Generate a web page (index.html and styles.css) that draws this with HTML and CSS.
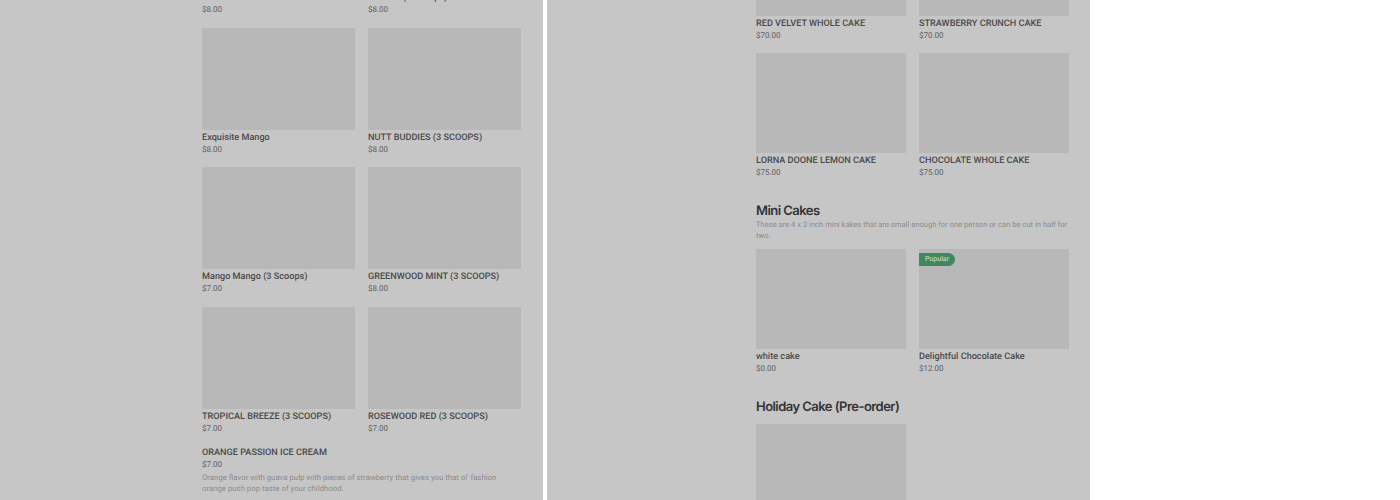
FILE: index.html
```html
<!DOCTYPE html>
<html lang="en">
<head>
<meta charset="utf-8">
<title>Menu</title>
<link rel="stylesheet" href="styles.css">
</head>
<body>
<div class="page">
  <main class="panel panel-left">
    <div class="column column-left">
      <div class="grid">
        <article class="item"><div class="thumb"></div><h3 class="name">Cookies n' Cream</h3><p class="price">$8.00</p></article>
        <article class="item"><div class="thumb"></div><h3 class="name">Passion (3 Scoops)</h3><p class="price">$8.00</p></article>
        <article class="item"><div class="thumb"></div><h3 class="name">Exquisite Mango</h3><p class="price">$8.00</p></article>
        <article class="item"><div class="thumb"></div><h3 class="name">NUTT BUDDIES (3 SCOOPS)</h3><p class="price">$8.00</p></article>
        <article class="item"><div class="thumb"></div><h3 class="name">Mango Mango (3 Scoops)</h3><p class="price">$7.00</p></article>
        <article class="item"><div class="thumb"></div><h3 class="name">GREENWOOD MINT (3 SCOOPS)</h3><p class="price">$8.00</p></article>
        <article class="item"><div class="thumb"></div><h3 class="name">TROPICAL BREEZE (3 SCOOPS)</h3><p class="price">$7.00</p></article>
        <article class="item"><div class="thumb"></div><h3 class="name">ROSEWOOD RED (3 SCOOPS)</h3><p class="price">$7.00</p></article>
      </div>
      <article class="wide-item">
        <h3 class="name">ORANGE PASSION ICE CREAM</h3>
        <p class="price price-wide">$7.00</p>
        <p class="desc desc-item">Orange flavor with guava pulp with pieces of strawberry that gives you that ol' fashion orange push pop taste of your childhood.</p>
      </article>
    </div>
  </main>
  <main class="panel panel-right">
    <div class="column column-right">
      <div class="grid grid-right">
        <article class="item"><div class="thumb thumb-right"></div><h3 class="name">RED VELVET WHOLE CAKE</h3><p class="price">$70.00</p></article>
        <article class="item"><div class="thumb thumb-right"></div><h3 class="name">STRAWBERRY CRUNCH CAKE</h3><p class="price">$70.00</p></article>
        <article class="item"><div class="thumb thumb-right"></div><h3 class="name">LORNA DOONE LEMON CAKE</h3><p class="price">$75.00</p></article>
        <article class="item"><div class="thumb thumb-right"></div><h3 class="name">CHOCOLATE WHOLE CAKE</h3><p class="price">$75.00</p></article>
      </div>
      <section class="section">
        <h2 class="heading">Mini Cakes</h2>
        <p class="desc section-desc">These are 4 x 2 inch mini kakes that are small enough for one person or can be cut in half for two.</p>
        <div class="grid grid-right">
          <article class="item"><div class="thumb thumb-right"></div><h3 class="name">white cake</h3><p class="price">$0.00</p></article>
          <article class="item"><div class="thumb thumb-right"><span class="badge">Popular</span></div><h3 class="name">Delightful Chocolate Cake</h3><p class="price">$12.00</p></article>
        </div>
      </section>
      <section class="section">
        <h2 class="heading heading-holiday">Holiday Cake (Pre-order)</h2>
        <div class="grid grid-right">
          <article class="item"><div class="thumb thumb-right"></div></article>
        </div>
      </section>
    </div>
  </main>
</div>
</body>
</html>
```
FILE: styles.css
```css
* { box-sizing: border-box; }
html, body { margin: 0; padding: 0; height: 100%; background: #fff; overflow: hidden; }
body { font-family: Roboto, "Liberation Sans", sans-serif; color: #333; text-rendering: geometricPrecision; }
.page { display: flex; gap: 4px; width: 1090px; height: 500px; }
.panel { flex: 0 0 543px; height: 500px; overflow: hidden; background: #c6c6c6; }
.panel-left { border-right: 4px solid #c8c8c8; }
.column-left { margin: -112px 0 0 202px; width: 319px; }
.column-right { margin: -84px 0 0 209px; width: 313px; }
.grid { display: grid; grid-template-columns: 153px 153px; column-gap: 13px; row-gap: 12.5px; }
.grid-right { grid-template-columns: 150px 150px; }
.thumb { position: relative; height: 102px; background: #b8b8b8; }
.thumb-right { height: 99.5px; }
.name { margin: 0; padding-top: 1px; font-size: 9.15px; line-height: 14px; font-weight: 500; color: #4a4a4a; }
.price { margin: 0; font-size: 8px; line-height: 10px; color: #5f5f5f; }
.wide-item { margin-top: 11px; }
.price-wide { margin-top: 0; }
.desc { margin: 1.75px 0 7.75px; font-size: 7.6px; line-height: 10.5px; color: #8c8c8c; }
.desc-item { margin: 3.5px 0 0; font-size: 7.8px; max-width: 305px; }
.section { margin-top: 25px; }
.heading { margin: 0; font-family: Inter, "Liberation Sans", sans-serif; font-size: 13px; line-height: 16px; font-weight: 600; letter-spacing: -0.55px; color: #333; }
.heading-holiday { margin-bottom: 9.5px; }
.badge { position: absolute; left: 0; top: 4px; height: 12.5px; padding: 0 6px; background: #3d8a60; color: #d5e2da; font-size: 7px; line-height: 12.5px; border-radius: 0 6.5px 6.5px 0; }
```
